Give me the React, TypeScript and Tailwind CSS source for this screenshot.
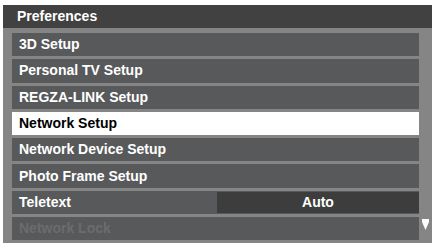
const rows = [
  { label: "3D Setup" },
  { label: "Personal TV Setup" },
  { label: "REGZA-LINK Setup" },
  { label: "Network Setup", selected: true },
  { label: "Network Device Setup" },
  { label: "Photo Frame Setup" },
  { label: "Teletext", value: "Auto" },
  { label: "Network Lock", disabled: true },
]

export default function App() {
  return (
    <div
      className="w-[432px] h-[243px] bg-white pt-[5px] pl-[3px] overflow-hidden"
      style={{ fontFamily: '"Liberation Sans", Arial, sans-serif' }}
    >
      <div className="h-[238px] flex flex-col bg-[#858585]">
        <div className="h-[23px] bg-[#414141] flex items-center pl-[14px] text-white font-bold text-[14px] shrink-0">
          Preferences
        </div>
        <div className="flex pt-[5px]">
          <div className="w-[407px] ml-[9px] flex flex-col gap-[3px]">
            {rows.map((row) => (
              <div
                key={row.label}
                className={
                  "h-[23.3px] flex items-center text-[14px] font-bold " +
                  (row.selected
                    ? "bg-white text-black"
                    : row.disabled
                      ? "bg-[#58595b] text-[#6b6c6e]"
                      : "bg-[#58595b] text-white")
                }
              >
                <span className="w-[205px] pl-[7px] shrink-0">{row.label}</span>
                {row.value && (
                  <span className="flex-1 h-[21px] bg-[#3d3d3d] flex items-center justify-center">
                    {row.value}
                  </span>
                )}
              </div>
            ))}
          </div>
          <div className="flex-1 flex flex-col justify-end items-center pb-[10px]">
            <svg width="7" height="11" viewBox="0 0 7 11">
              <polygon points="0,0 7,0 7,3 3.5,11 0,3" fill="#ffffff" />
            </svg>
          </div>
        </div>
      </div>
    </div>
  )
}
